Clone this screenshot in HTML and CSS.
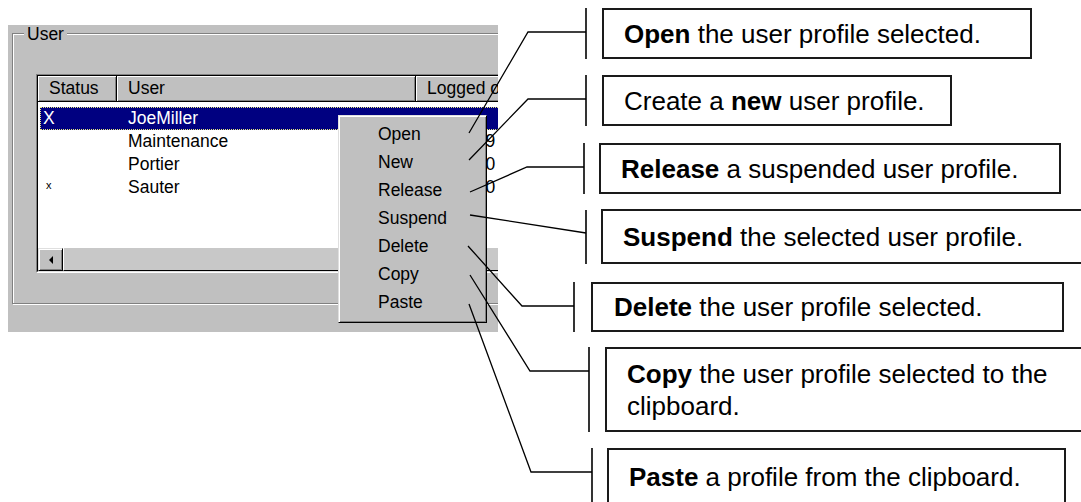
FILE: index.html
```html
<!DOCTYPE html>
<html lang="en">
<head>
    <meta charset="UTF-8">
    <title>User profile context menu</title>
    <link rel="stylesheet" href="styles.css">
</head>
<body>
    <div class="stage">
        <div class="window">
            <div class="group">
                <span class="group-label">User</span>
                <div class="listview">
                    <div class="listview-inner">
                        <div class="list-header">
                            <div class="hcell col-status">Status</div>
                            <div class="hcell col-user">User</div>
                            <div class="hcell col-logged">Logged on</div>
                        </div>
                        <div class="list-rows">
                            <div class="row selected">
                                <div class="cell col-status">X</div>
                                <div class="cell col-user">JoeMiller</div>
                                <div class="cell col-logged"></div>
                            </div>
                            <div class="row">
                                <div class="cell col-status"></div>
                                <div class="cell col-user">Maintenance</div>
                                <div class="cell col-logged">12.05.99</div>
                            </div>
                            <div class="row">
                                <div class="cell col-status"></div>
                                <div class="cell col-user">Portier</div>
                                <div class="cell col-logged">12.05.00</div>
                            </div>
                            <div class="row">
                                <div class="cell col-status small-mark">x</div>
                                <div class="cell col-user">Sauter</div>
                                <div class="cell col-logged">12.05.00</div>
                            </div>
                        </div>
                        <div class="hscroll">
                            <div class="scroll-btn"><span class="arrow-left"></span></div>
                            <div class="scroll-track"></div>
                        </div>
                    </div>
                </div>
            </div>

            <!-- popup menu opened over the list -->
            <div class="menu">
                <div class="menu-item">Open</div>
                <div class="menu-item">New</div>
                <div class="menu-item">Release</div>
                <div class="menu-item">Suspend</div>
                <div class="menu-item">Delete</div>
                <div class="menu-item">Copy</div>
                <div class="menu-item">Paste</div>
            </div>
        </div>

        <svg class="leaders" width="1081" height="502" viewBox="0 0 1081 502">
            <g class="leader">
                <polyline points="469,133 528,32 586,32"/>
                <polyline points="469,160 528,99 586,99"/>
                <polyline points="470,192 527,167 584,167"/>
                <polyline points="470,215 586,233"/>
                <polyline points="468,246 522,306 574,306"/>
                <polyline points="470,275 530,371 589,371"/>
                <polyline points="469,304 531,472 592,472"/>
            </g>
            <g class="tick">
                <line x1="586" y1="8" x2="586" y2="59"/>
                <line x1="586" y1="75" x2="586" y2="126"/>
                <line x1="584" y1="143" x2="584" y2="194"/>
                <line x1="586" y1="210" x2="586" y2="264"/>
                <line x1="574" y1="282" x2="574" y2="332"/>
                <line x1="589" y1="347" x2="589" y2="432"/>
                <line x1="592" y1="448" x2="592" y2="510"/>
            </g>
        </svg>

        <div class="note note-open"><span><b>Open</b> the user profile selected.</span></div>
        <div class="note note-new"><span>Create a <b>new</b> user profile.</span></div>
        <div class="note note-release"><span><b>Release</b> a suspended user profile.</span></div>
        <div class="note note-suspend"><span><b>Suspend</b> the selected user profile.</span></div>
        <div class="note note-delete"><span><b>Delete</b> the user profile selected.</span></div>
        <div class="note note-copy"><span><b>Copy</b> the user profile selected to the<br>clipboard.</span></div>
        <div class="note note-paste"><span><b>Paste</b> a profile from the clipboard.</span></div>
    </div>
</body>
</html>
```
FILE: styles.css
```css
body {
    margin: 0;
    background: #fff;
    overflow: hidden;
    font-family: 'Liberation Sans', Arial, sans-serif;
}
.stage {
    position: relative;
    width: 1081px;
    height: 502px;
    padding: 25px 0 0 8px;
    box-sizing: border-box;
    overflow: hidden;
}

/* the cut-out dialog */
.window {
    position: relative;
    width: 490px;
    height: 307px;
    background: #c0c0c0;
    overflow: hidden;
    font-size: 17.5px;
    color: #000;
}
.group {
    position: relative;
    box-sizing: border-box;
    width: 540px;
    height: 271px;
    margin: 8px 0 0 4px;
    padding: 40px 0 0 23px;
    border: 1px solid #808080;
    box-shadow: inset 1px 1px 0 #fff, 1px 1px 0 #fff;
}
.group-label {
    position: absolute;
    top: -10px;
    left: 11px;
    padding: 0 3px;
    line-height: 20px;
    background: #c0c0c0;
}
.listview {
    width: 520px;
    border: 1px solid;
    border-color: #808080 #fff #fff #808080;
}
.listview-inner {
    display: flex;
    flex-direction: column;
    height: 195px;
    border: 1px solid;
    border-color: #000 #dfdfdf #dfdfdf #000;
    background: #fff;
}
.list-header {
    display: flex;
    height: 26px;
    flex: none;
}
.hcell {
    box-sizing: border-box;
    height: 26px;
    padding-left: 11px;
    line-height: 25px;
    background: #c0c0c0;
    border-right: 1px solid #000;
    border-bottom: 1px solid #000;
    box-shadow: inset 1px 1px 0 #fff, inset -1px -1px 0 #808080;
    white-space: nowrap;
}
.hcell.col-status { width: 79px; }
.hcell.col-user { width: 299px; }
.hcell.col-logged { width: 140px; }

.list-rows {
    flex: 1;
    padding-top: 5px;
}
.row {
    display: flex;
    height: 23px;
    line-height: 23px;
    margin-left: 2px;
    white-space: nowrap;
}
.row.selected {
    background: #000080;
    color: #fff;
    outline: 1px dotted #e8e880;
    outline-offset: -1px;
}
.cell.col-status { width: 77px; padding-left: 3px; box-sizing: border-box; }
.cell.col-user { width: 299px; padding-left: 11px; box-sizing: border-box; }
.cell.col-logged { padding-left: 11px; }
.small-mark {
    font-size: 11px;
    text-indent: 3px;
    line-height: 19px;
}

.hscroll {
    display: flex;
    height: 24px;
    flex: none;
    background: #c0c0c0;
    border-top: 1px solid #fff;
    box-sizing: border-box;
}
.scroll-btn {
    box-sizing: border-box;
    width: 25px;
    height: 100%;
    display: flex;
    align-items: center;
    justify-content: center;
    border: 1px solid;
    border-color: #dfdfdf #000 #000 #dfdfdf;
    box-shadow: inset 1px 1px 0 #fff, inset -1px -1px 0 #808080;
}
.arrow-left {
    width: 0;
    height: 0;
    border-top: 4px solid transparent;
    border-bottom: 4px solid transparent;
    border-right: 4px solid #000;
}
.scroll-track {
    flex: 1;
    background: #c8c8c8;
    border-left: 1px solid #fff;
    border-bottom: 1px solid #000;
}

/* context menu over the list */
.menu {
    position: absolute;
    left: 330px;
    top: 90px;
    width: 149px;
    height: 208px;
    box-sizing: border-box;
    padding: 4px 0;
    background: #c0c0c0;
    border: 1px solid;
    border-color: #dfdfdf #000 #000 #dfdfdf;
    box-shadow: inset 1px 1px 0 #fff, inset -1px -1px 0 #808080;
}
.menu-item {
    height: 28px;
    line-height: 28px;
    padding-left: 39px;
}

/* callout lines and boxes */
.leaders {
    position: absolute;
    top: 0;
    left: 0;
    pointer-events: none;
}
.leader polyline {
    fill: none;
    stroke: #000;
    stroke-width: 1.3;
}
.tick line {
    stroke: #000;
    stroke-width: 1.6;
}
.note {
    position: absolute;
    display: flex;
    align-items: center;
    box-sizing: border-box;
    padding-left: 20px;
    border: 2px solid #1a1a1a;
    font-size: 26px;
    line-height: 32px;
    color: #000;
    white-space: nowrap;
}
.note b {
    font-weight: bold;
}
.note-open { left: 602px; top: 8px; width: 430px; height: 51px; }
.note-new { left: 602px; top: 75px; width: 350px; height: 51px; }
.note-release { left: 599px; top: 143px; width: 462px; height: 51px; }
.note-suspend { left: 601px; top: 209px; width: 500px; height: 55px; }
.note-delete { left: 591px; top: 282px; width: 473px; height: 50px; padding-left: 21px; }
.note-copy { left: 605px; top: 347px; width: 500px; height: 85px; }
.note-paste { left: 607px; top: 448px; width: 459px; height: 58px; }
```
